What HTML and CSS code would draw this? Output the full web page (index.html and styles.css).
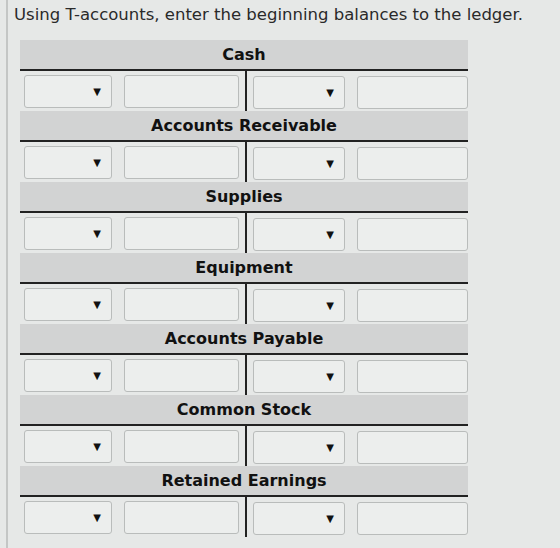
FILE: index.html
```html
<!DOCTYPE html>
<html>
<head>
    <link rel="stylesheet" href="styles.css">
</head>
<body>
    <div class="page">
        <p class="prompt">Using T-accounts, enter the beginning balances to the ledger.</p>

        <div class="ledger">
            <div class="t-account">
                <div class="t-title">Cash</div>
                <div class="t-body">
                    <div class="t-side debit">
                        <div class="pick"><span class="arrow">&#9660;</span></div>
                        <div class="amount"></div>
                    </div>
                    <div class="t-side credit">
                        <div class="pick"><span class="arrow">&#9660;</span></div>
                        <div class="amount"></div>
                    </div>
                </div>
            </div>

            <div class="t-account">
                <div class="t-title">Accounts Receivable</div>
                <div class="t-body">
                    <div class="t-side debit">
                        <div class="pick"><span class="arrow">&#9660;</span></div>
                        <div class="amount"></div>
                    </div>
                    <div class="t-side credit">
                        <div class="pick"><span class="arrow">&#9660;</span></div>
                        <div class="amount"></div>
                    </div>
                </div>
            </div>

            <div class="t-account">
                <div class="t-title">Supplies</div>
                <div class="t-body">
                    <div class="t-side debit">
                        <div class="pick"><span class="arrow">&#9660;</span></div>
                        <div class="amount"></div>
                    </div>
                    <div class="t-side credit">
                        <div class="pick"><span class="arrow">&#9660;</span></div>
                        <div class="amount"></div>
                    </div>
                </div>
            </div>

            <div class="t-account">
                <div class="t-title">Equipment</div>
                <div class="t-body">
                    <div class="t-side debit">
                        <div class="pick"><span class="arrow">&#9660;</span></div>
                        <div class="amount"></div>
                    </div>
                    <div class="t-side credit">
                        <div class="pick"><span class="arrow">&#9660;</span></div>
                        <div class="amount"></div>
                    </div>
                </div>
            </div>

            <div class="t-account">
                <div class="t-title">Accounts Payable</div>
                <div class="t-body">
                    <div class="t-side debit">
                        <div class="pick"><span class="arrow">&#9660;</span></div>
                        <div class="amount"></div>
                    </div>
                    <div class="t-side credit">
                        <div class="pick"><span class="arrow">&#9660;</span></div>
                        <div class="amount"></div>
                    </div>
                </div>
            </div>

            <div class="t-account">
                <div class="t-title">Common Stock</div>
                <div class="t-body">
                    <div class="t-side debit">
                        <div class="pick"><span class="arrow">&#9660;</span></div>
                        <div class="amount"></div>
                    </div>
                    <div class="t-side credit">
                        <div class="pick"><span class="arrow">&#9660;</span></div>
                        <div class="amount"></div>
                    </div>
                </div>
            </div>

            <div class="t-account">
                <div class="t-title">Retained Earnings</div>
                <div class="t-body">
                    <div class="t-side debit">
                        <div class="pick"><span class="arrow">&#9660;</span></div>
                        <div class="amount"></div>
                    </div>
                    <div class="t-side credit">
                        <div class="pick"><span class="arrow">&#9660;</span></div>
                        <div class="amount"></div>
                    </div>
                </div>
            </div>
        </div>
    </div>
</body>
</html>
```

FILE: styles.css
```css
body {
    margin: 0;
    padding: 0;
    min-height: 548px;
    background: #e6e8e7;
    font-family: "DejaVu Sans", Verdana, sans-serif;
    color: #1a1a1a;
}

.page {
    margin-left: 6px;
    border-left: 2px solid #c4c6c5;
    min-height: 548px;
    padding: 0 0 0 6px;
}

.prompt {
    margin: 0;
    padding-top: 3px;
    font-size: 16.5px;
    line-height: 24px;
    color: #2a2a2a;
}

.ledger {
    margin-top: 13px;
    width: 448px;
    margin-left: 6px;
}

.t-account {
    height: 71px;
}

.t-title {
    height: 29px;
    line-height: 30px;
    background: #d2d3d3;
    border-bottom: 2px solid #222;
    text-align: center;
    font-weight: bold;
    font-size: 16px;
    color: #111;
}

.t-body {
    display: flex;
    height: 40px;
}

.t-side {
    flex: 1;
    display: flex;
    gap: 12px;
    align-items: center;
}

.t-side.debit {
    border-right: 2px solid #222;
    padding: 0 6px 0 4px;
}

.t-side.credit {
    padding: 2px 0 0 6px;
}

.pick,
.amount {
    height: 33px;
    box-sizing: border-box;
    border: 1px solid #b9bcbb;
    border-radius: 3px;
    background: #eceeed;
}

.pick {
    width: 88px;
    display: flex;
    align-items: center;
    justify-content: flex-end;
    padding-right: 10px;
}

.credit .pick {
    width: 92px;
}

.amount {
    flex: 1;
}

.arrow {
    font-size: 10px;
    color: #111;
}
```
